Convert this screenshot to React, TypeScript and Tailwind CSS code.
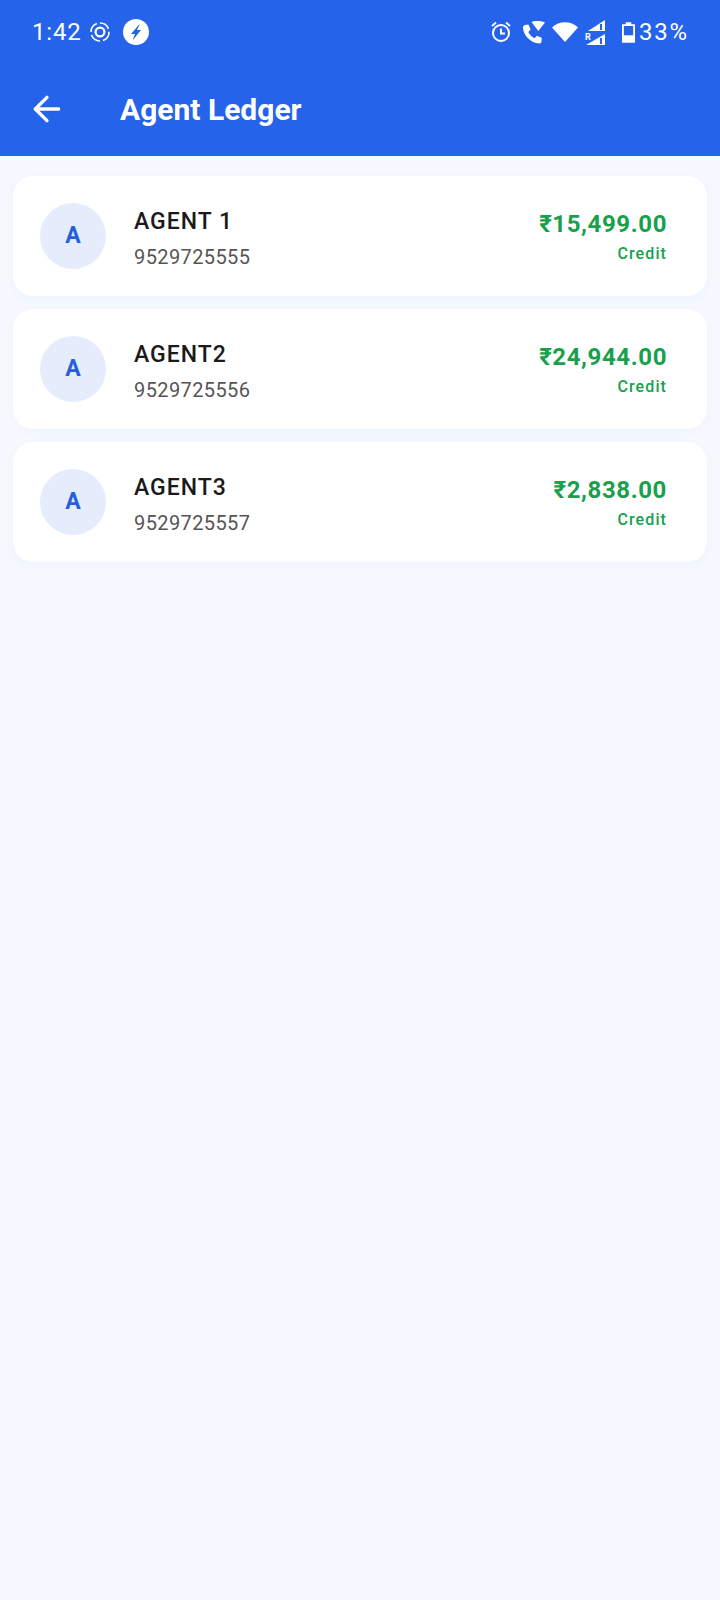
import { ArrowLeft } from 'lucide-react'

const agents = [
  { name: 'AGENT 1', phone: '9529725555', balance: '₹15,499.00' },
  { name: 'AGENT2', phone: '9529725556', balance: '₹24,944.00' },
  { name: 'AGENT3', phone: '9529725557', balance: '₹2,838.00' },
]

function StatusBar() {
  return (
    <div className="flex h-[64px] items-center justify-between pl-[32px] pr-[31px] text-white">
      <div className="flex items-center">
        <span className="text-[24px] font-normal tracking-[0.8px]">1:42</span>
        {/* focus ring */}
        <svg className="ml-[9px]" width="20" height="20" viewBox="0 0 20 20" fill="none" stroke="white">
          <circle cx="10" cy="10" r="4.4" strokeWidth="2.2" />
          <circle cx="10" cy="10" r="9" strokeWidth="1.6" strokeDasharray="11 3" />
        </svg>
        {/* bolt */}
        <svg className="ml-[13px]" width="26" height="26" viewBox="0 0 26 26">
          <circle cx="13" cy="13" r="13" fill="white" />
          <path d="M17 4.5 L8 15 H12 L9.5 21.5 L18 11 H14 Z" fill="#2563eb" />
        </svg>
      </div>
      <div className="flex items-center">
        {/* alarm */}
        <svg width="20" height="22" viewBox="0 0 20 22" fill="none" stroke="white" strokeWidth="2">
          <circle cx="10" cy="12" r="8" />
          <path d="M10 7.5 V12.5 H14" />
          <path d="M1 5 L5 1.5 M19 5 L15 1.5" />
        </svg>
        {/* wifi call */}
        <svg className="ml-[11px]" width="23" height="23" viewBox="0 0 24 24" fill="white">
          <path d="M10 1 C13 -0.5 20 -0.5 24 1.5 L17 10.5 Z" />
          <path d="M4 4 C3 4 1 5 1 7 C1.5 15 9 23 18 23.5 C20 23.5 20.5 21.5 20.5 20 V17.5 L15.5 15.5 L13 18 C10 16.5 8 14 6.5 11.5 L9 9 L7 4 Z" />
        </svg>
        {/* wifi */}
        <svg className="ml-[7px]" width="26" height="20" viewBox="0 0 26 20" fill="white">
          <path d="M0 5.5 C7 -1.5 19 -1.5 26 5.5 L13 20 Z" />
        </svg>
        {/* signal with R */}
        <svg className="ml-[7px]" width="20" height="25" viewBox="0 0 20 25" fill="white">
          <path d="M3 11 L20 0 V11 Z M15 4 V10 H17 V4 Z" fillRule="evenodd" />
          <path d="M1 25 L20 14 V25 Z M15 18 V24 H17 V18 Z" fillRule="evenodd" />
          <text x="0" y="20" fontSize="9" fontWeight="700" fontFamily="Roboto, sans-serif">R</text>
        </svg>
        {/* battery */}
        <svg className="ml-[17px]" width="13" height="21" viewBox="0 0 14 22">
          <path d="M4 0 H10 V2 H14 V22 H0 V2 H4 Z" fill="white" />
          <rect x="2" y="4" width="10" height="10" fill="#2563eb" />
        </svg>
        <span className="ml-[4px] text-[24px] font-normal tracking-[1.8px]">33%</span>
      </div>
    </div>
  )
}

function AgentCard({ name, phone, balance }: { name: string; phone: string; balance: string }) {
  return (
    <div className="flex h-[120px] items-center justify-between rounded-[20px] bg-white pl-[27px] pr-[40px] shadow-[0_2px_8px_rgba(37,99,235,0.04)]">
      <div className="flex items-center">
        <div className="flex h-[66px] w-[66px] items-center justify-center rounded-full bg-[#e5ecfc] text-[23px] font-bold text-[#2560dc]">
          A
        </div>
        <div className="ml-[28px] mt-[6px] flex flex-col">
          <span className="text-[23px] font-medium leading-[30px] tracking-[1px] text-[#1a1a1a]">{name}</span>
          <span className="mt-[6px] text-[20px] leading-[28px] tracking-[0.4px] text-[#555555]">{phone}</span>
        </div>
      </div>
      <div className="flex flex-col items-end">
        <span className="text-[24px] font-bold leading-[32px] tracking-[0.6px] text-[#18a04c]">{balance}</span>
        <span className="mt-[3px] text-[16px] font-medium leading-[22px] tracking-[1.1px] text-[#18a04c]">Credit</span>
      </div>
    </div>
  )
}

export default function App() {
  return (
    <div className="flex min-h-[1600px] flex-col bg-[#f5f8ff] font-['Roboto',sans-serif]">
      <header className="h-[156px] bg-[#2563eb]">
        <StatusBar />
        <div className="flex h-[92px] items-center pb-[2px] pl-[27px]">
          <ArrowLeft className="text-white" size={40} strokeWidth={2} />
          <h1 className="ml-[53px] text-[30px] font-bold text-white">Agent Ledger</h1>
        </div>
      </header>
      <main className="flex flex-col gap-[13px] px-[13px] pt-[20px]">
        {agents.map((agent) => (
          <AgentCard key={agent.name} {...agent} />
        ))}
      </main>
    </div>
  )
}
